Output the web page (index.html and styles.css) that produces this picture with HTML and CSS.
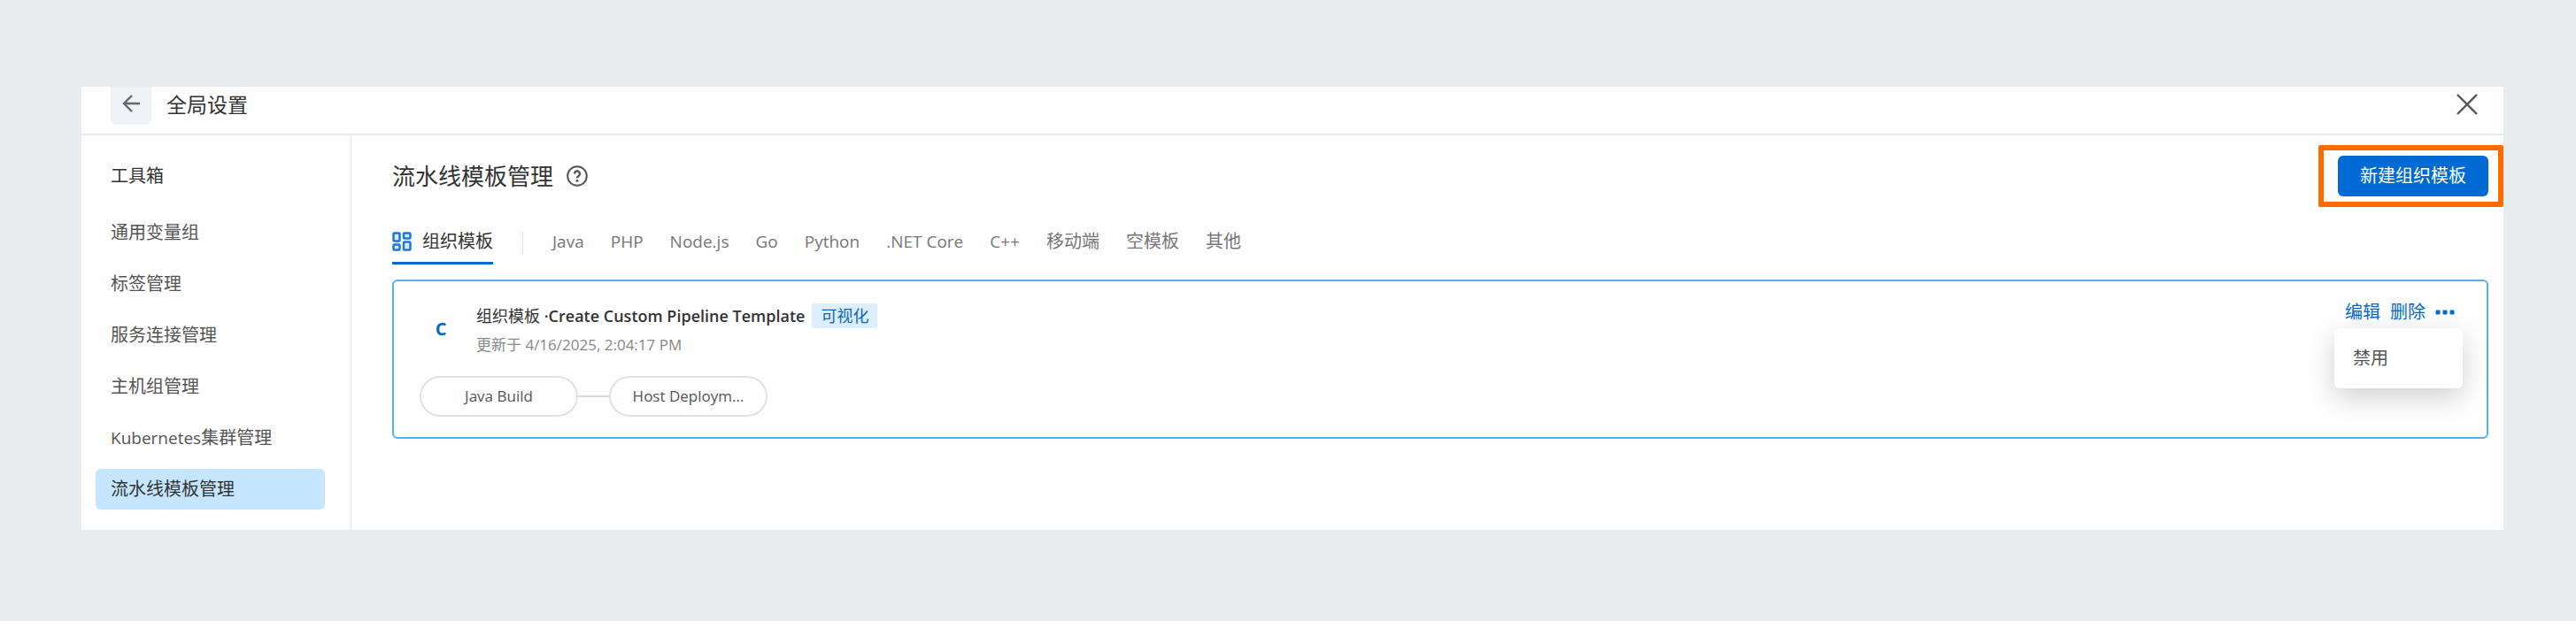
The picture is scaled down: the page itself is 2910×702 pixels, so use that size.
FILE: index.html
```html
<!DOCTYPE html>
<html lang="zh-CN">
<head>
    <meta charset="utf-8">
    <meta name="viewport" content="width=device-width, initial-scale=1.0">
    <title>全局设置</title>
    <link rel="stylesheet" href="styles.css">
</head>
<body>
    <div class="panel">
        <header class="header">
            <button class="back-button" type="button" aria-label="返回">
                <svg width="20" height="20" viewBox="0 0 20 20" fill="none" stroke="currentColor" stroke-width="2.4">
                    <path d="M20 10H2M11 1L2 10l9 9"/>
                </svg>
            </button>
            <div class="header-title">全局设置</div>
            <button class="close-button" type="button" aria-label="关闭">
                <svg width="24" height="24" viewBox="0 0 24 24" fill="none" stroke="currentColor" stroke-width="2.4">
                    <path d="M1 1l22 22M23 1L1 23"/>
                </svg>
            </button>
        </header>

        <div class="body">
            <nav class="sidebar">
                <h2 class="sidebar-title">工具箱</h2>
                <div class="sidebar-list">
                    <a class="sidebar-item" href="#">通用变量组</a>
                    <a class="sidebar-item" href="#">标签管理</a>
                    <a class="sidebar-item" href="#">服务连接管理</a>
                    <a class="sidebar-item" href="#">主机组管理</a>
                    <a class="sidebar-item" href="#"><span class="latin">Kubernetes</span>集群管理</a>
                    <a class="sidebar-item active" href="#">流水线模板管理</a>
                </div>
            </nav>

            <main class="main">
                <div class="title-row">
                    <h1 class="page-title">流水线模板管理</h1>
                    <svg class="help-icon" width="24" height="24" viewBox="0 0 24 24" fill="none" stroke="currentColor" stroke-width="2">
                        <circle cx="12" cy="12" r="10.8"/>
                        <path d="M9 9.4a3 3 0 1 1 4.6 2.5c-1.1.7-1.6 1.2-1.6 2.4" stroke-width="2.4"/>
                        <circle cx="12" cy="17.2" r="1.5" fill="currentColor" stroke="none"/>
                    </svg>
                    <div class="highlight">
                        <button class="primary-button" type="button">新建组织模板</button>
                    </div>
                </div>

                <div class="tabs">
                    <a class="tab active" href="#">
                        <svg width="22" height="22" viewBox="0 0 22 22" fill="#d6eaff" stroke="currentColor" stroke-width="2.5">
                            <rect x="1.5" y="1.5" width="7" height="9" rx="1"/>
                            <rect x="13" y="1.5" width="7.5" height="6" rx="1"/>
                            <rect x="1.5" y="14.5" width="7" height="6" rx="1"/>
                            <rect x="13" y="11.5" width="7.5" height="9" rx="1"/>
                        </svg>
                        组织模板
                    </a>
                    <span class="tab-divider"></span>
                    <a class="tab latin" href="#">Java</a>
                    <a class="tab latin" href="#">PHP</a>
                    <a class="tab latin" href="#">Node.js</a>
                    <a class="tab latin" href="#">Go</a>
                    <a class="tab latin" href="#">Python</a>
                    <a class="tab latin" href="#">.NET Core</a>
                    <a class="tab latin" href="#">C++</a>
                    <a class="tab" href="#">移动端</a>
                    <a class="tab" href="#">空模板</a>
                    <a class="tab" href="#">其他</a>
                </div>

                <section class="card">
                    <div class="card-head">
                        <div class="card-logo">C</div>
                        <div class="card-info">
                            <div class="card-title">
                                <span>组织模板 <strong class="card-name">·Create Custom Pipeline Template</strong></span>
                                <span class="tag">可视化</span>
                            </div>
                            <div class="card-time">更新于 4/16/2025, 2:04:17 PM</div>
                        </div>
                        <div class="actions">
                            <button class="action" type="button">编辑</button>
                            <button class="action" type="button">删除</button>
                            <button class="action" type="button" aria-label="更多">
                                <svg width="22" height="6" viewBox="0 0 22 6" fill="currentColor">
                                    <rect x="0.5" y="0.5" width="5" height="5" rx="1.2"/>
                                    <rect x="8.5" y="0.5" width="5" height="5" rx="1.2"/>
                                    <rect x="16.5" y="0.5" width="5" height="5" rx="1.2"/>
                                </svg>
                            </button>
                            <div class="menu">
                                <button class="menu-item" type="button">禁用</button>
                            </div>
                        </div>
                    </div>
                    <div class="stages">
                        <div class="stage">Java Build</div>
                        <div class="stage-line"></div>
                        <div class="stage">Host Deploym...</div>
                    </div>
                </section>
            </main>
        </div>
    </div>
</body>
</html>
```
FILE: styles.css
```css
:root {
    --blue: #006ad4;
    --text: #333;
    --text-light: #555;
    --line: #e6eaee;
}

* {
    box-sizing: border-box;
}

body {
    margin: 0;
    padding: 98px 82px 104px 92px;
    background: #e8ecef;
    color: var(--text);
    font-family: "Open Sans", "Noto Sans CJK SC", sans-serif;
    font-size: 20px;
    line-height: 28px;
}

button {
    padding: 0;
    border: none;
    background: transparent;
    color: inherit;
    font: inherit;
    cursor: pointer;
}

a {
    color: inherit;
    text-decoration: none;
}

svg {
    display: block;
    flex: none;
}

/* Latin words run wide next to Chinese text of the same size */
.latin {
    font-size: 19px;
}

.panel {
    background: #fefefe;
}

.header {
    display: flex;
    align-items: flex-start;
    padding: 0 29px 10px 33px;
    border-bottom: 2px solid var(--line);
}

.back-button {
    display: flex;
    justify-content: center;
    width: 46px;
    height: 43px;
    padding-top: 9px;
    border-radius: 0 0 6px 6px;
    background: #eff3f7;
    color: #666;
}

.header-title {
    flex: 1;
    margin-left: 17px;
    font-size: 23px;
    line-height: 41px;
}

.close-button {
    padding-top: 8px;
    color: var(--text-light);
}

.body {
    display: flex;
}

.sidebar {
    flex: none;
    width: 305px;
    padding: 32px 29px 23px 16px;
    border-right: 1px solid var(--line);
}

.sidebar-title {
    margin: 0 0 27px;
    padding-left: 17px;
    font-size: 20px;
    font-weight: 400;
}

.sidebar-list {
    display: flex;
    flex-direction: column;
    gap: 12px;
}

.sidebar-item {
    padding: 9px 17px;
    border-radius: 6px;
    color: var(--text-light);
}

.sidebar-item.active {
    background: #c4e7ff;
    color: var(--text);
}

.main {
    flex: 1;
    min-width: 0;
    padding: 11px 0 0 46px;
}

.title-row {
    display: flex;
    align-items: center;
}

.page-title {
    margin: 0;
    font-size: 26px;
    font-weight: 400;
}

.help-icon {
    margin-left: 15px;
    color: var(--text-light);
}

/* Orange frame that points at the create button */
.highlight {
    margin-left: auto;
    padding: 6px 11px 6px 16px;
    border: 6px solid #ff6a00;
    border-radius: 2px;
}

.primary-button {
    display: block;
    padding: 9px 25px;
    border-radius: 6px;
    background: var(--blue);
    color: #fff;
}

.tabs {
    display: flex;
    align-items: center;
    gap: 30px;
    margin: 14px 17px 17px 0;
    color: #777;
}

.tab {
    display: flex;
    align-items: center;
    gap: 12px;
    padding: 11px 0 9px;
    border-bottom: 3px solid transparent;
}

.tab.active {
    border-color: var(--blue);
    color: var(--text);
}

.tab.active svg {
    color: #1a77dc;
}

.tab-divider {
    width: 1px;
    height: 26px;
    margin: 0 3px;
    background: #dfe5ea;
}

.card {
    margin-right: 17px;
    padding: 25px 36px 23px 29px;
    border: 2px solid #55b1ee;
    border-radius: 6px;
}

.card-head {
    display: flex;
    align-items: center;
}

.card-logo {
    width: 48px;
    padding-bottom: 4px;
    color: var(--blue);
    font-weight: 700;
    text-align: center;
}

.card-info {
    flex: 1;
    margin-left: 16px;
}

.card-title {
    display: flex;
    align-items: center;
    gap: 8px;
    margin-bottom: 5px;
    font-size: 18px;
}

.card-name {
    font-weight: 600;
}

.tag {
    padding: 0 10px;
    border-radius: 3px;
    background: #dbefff;
    color: #1263b8;
}

.card-time {
    color: #888;
    font-size: 17px;
}

.actions {
    display: flex;
    align-self: flex-start;
    align-items: center;
    gap: 11px;
    position: relative;
    margin-top: -4px;
    color: var(--blue);
}

.menu {
    position: absolute;
    top: 32px;
    right: -9px;
    width: 145px;
    padding: 20px 21px;
    border-radius: 6px;
    background: #fff;
    box-shadow: 0 10px 30px rgba(0, 0, 0, 0.18);
    color: var(--text-light);
}

.menu-item {
    display: block;
    width: 100%;
    text-align: left;
}

.stages {
    display: flex;
    align-items: center;
    margin-top: 21px;
}

.stage {
    width: 179px;
    padding: 8px 0;
    border: 2px solid #dde3e9;
    border-radius: 23px;
    color: var(--text-light);
    font-size: 17px;
    line-height: 26px;
    text-align: center;
}

.stage-line {
    width: 35px;
    height: 2px;
    background: #d3dae1;
}
```
